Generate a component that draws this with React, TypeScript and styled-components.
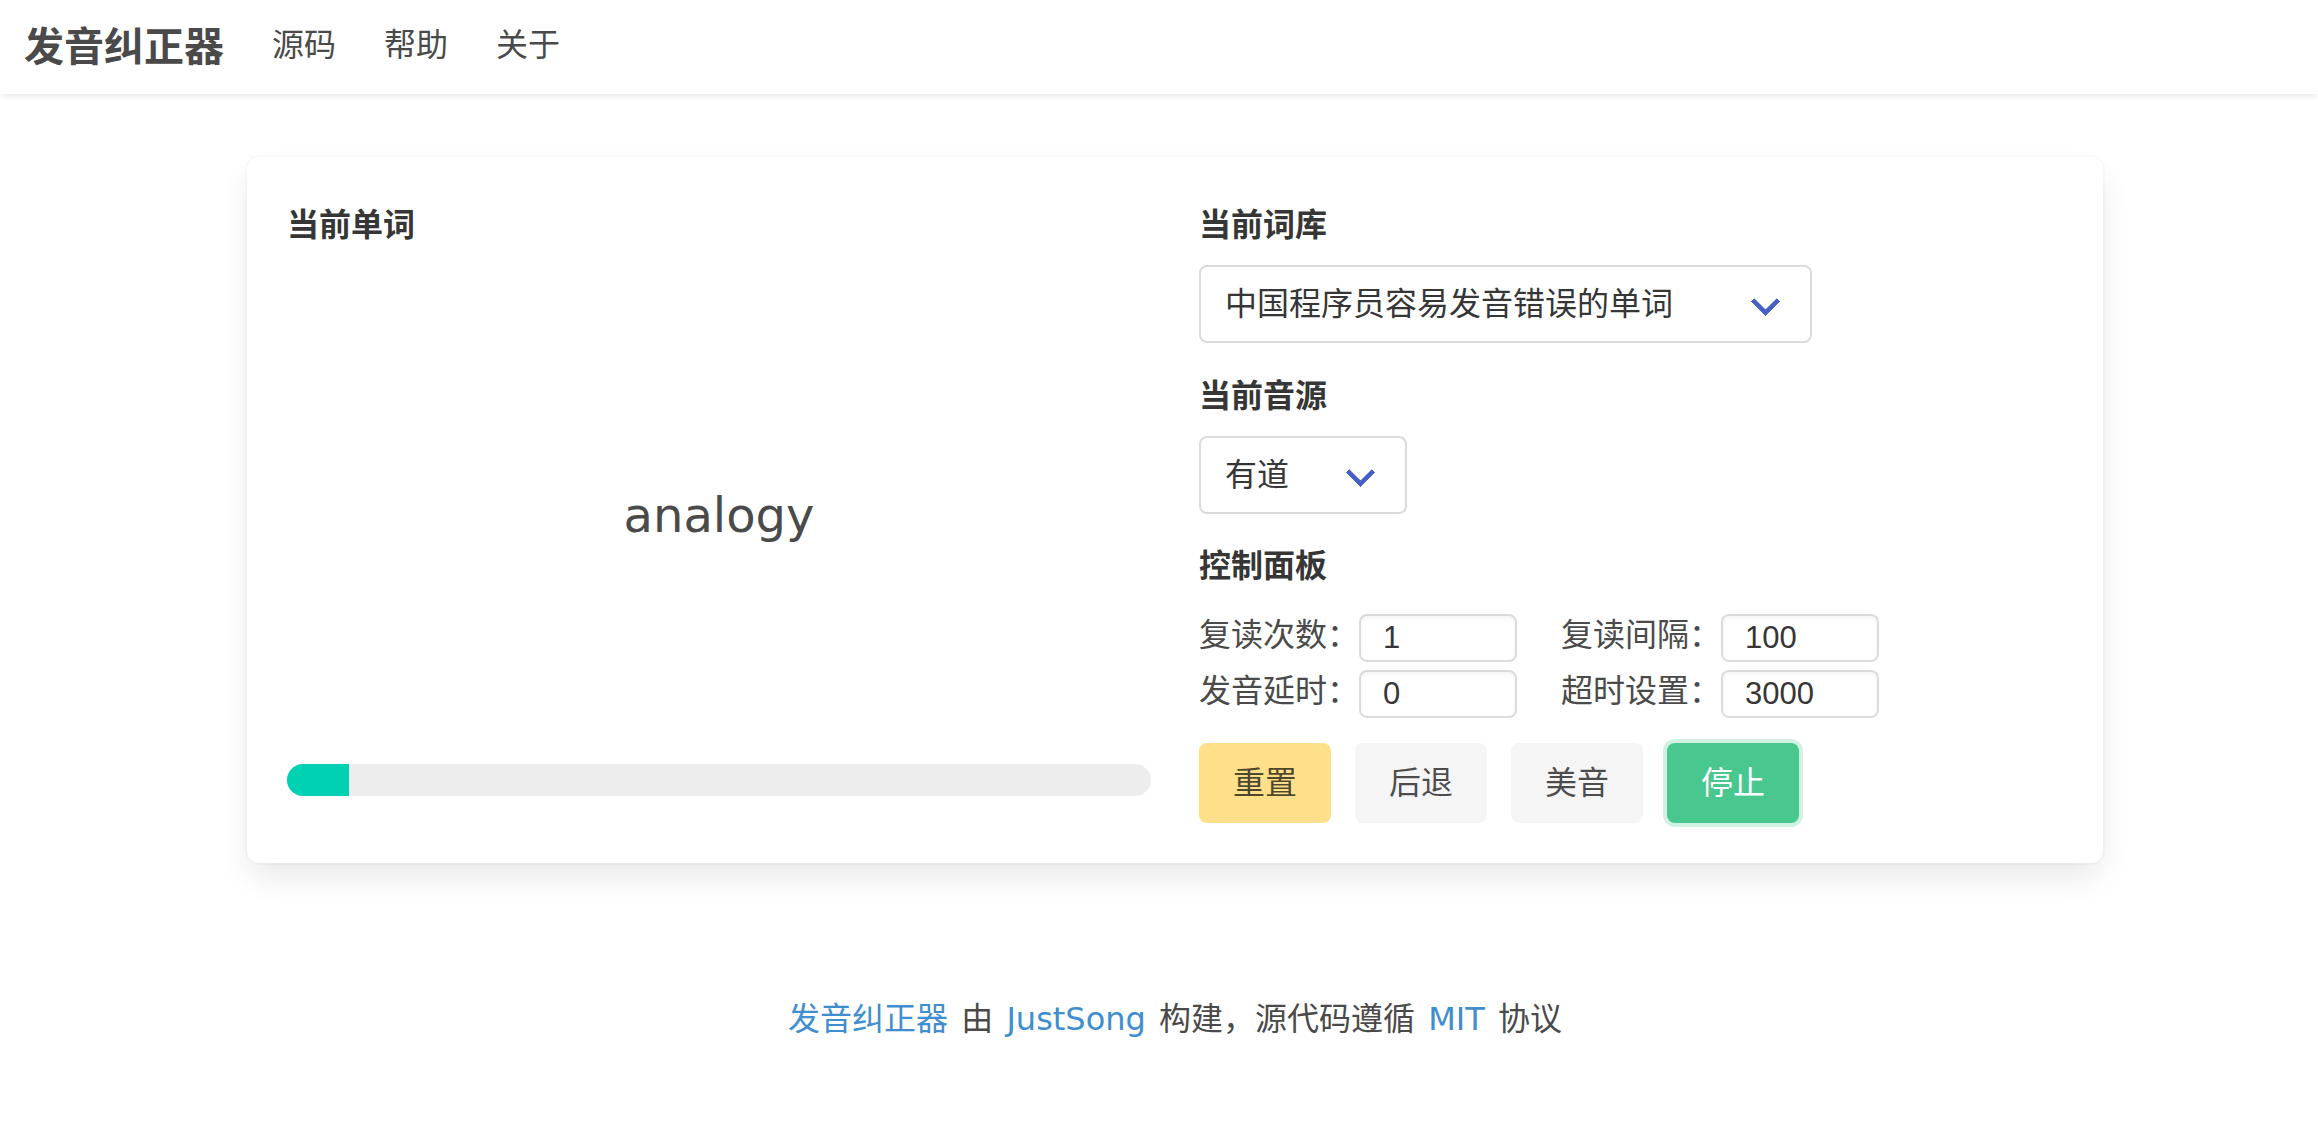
import styled, { createGlobalStyle, css } from 'styled-components';

const GlobalStyle = createGlobalStyle`
  html, body {
    margin: 0;
    padding: 0;
    background: #fff;
  }
  body {
    font-family: 'DejaVu Sans', 'Noto Sans CJK SC', sans-serif;
    font-size: 32px;
    line-height: 1.5;
    color: #4a4a4a;
  }
  * {
    box-sizing: border-box;
  }
`;

const settings = [
  { label: '复读次数：', value: '1' },
  { label: '复读间隔：', value: '100' },
  { label: '发音延时：', value: '0' },
  { label: '超时设置：', value: '3000' },
];

const actions: { text: string; variant: Variant }[] = [
  { text: '重置', variant: 'warning' },
  { text: '后退', variant: 'light' },
  { text: '美音', variant: 'light' },
  { text: '停止', variant: 'success' },
];

const progress = { value: 5, max: 70 };

const App = () => {
  return (
    <>
      <GlobalStyle />
      <Navbar>
        <Brand>发音纠正器</Brand>
        <NavItem>源码</NavItem>
        <NavItem>帮助</NavItem>
        <NavItem>关于</NavItem>
      </Navbar>
      <Page>
        <Card>
          <LeftCol>
            <Label>当前单词</Label>
            <Word>analogy</Word>
            <Progress>
              <ProgressFill style={{ width: `${(progress.value / progress.max) * 100}%` }} />
            </Progress>
          </LeftCol>
          <RightCol>
            <Label>当前词库</Label>
            <SelectWrap $width={613}>
              <Select defaultValue="cn">
                <option value="cn">中国程序员容易发音错误的单词</option>
              </Select>
            </SelectWrap>
            <Label $top={29}>当前音源</Label>
            <SelectWrap $width={208}>
              <Select defaultValue="youdao">
                <option value="youdao">有道</option>
              </Select>
            </SelectWrap>
            <Label $top={28}>控制面板</Label>
            <SettingsGrid>
              {settings.map((item) => (
                <Setting key={item.label}>
                  <SettingLabel>{item.label}</SettingLabel>
                  <Input defaultValue={item.value} />
                </Setting>
              ))}
            </SettingsGrid>
            <Buttons>
              {actions.map((item) => (
                <Button key={item.text} $variant={item.variant}>
                  {item.text}
                </Button>
              ))}
            </Buttons>
          </RightCol>
        </Card>
        <Footer>
          <Link>发音纠正器</Link> 由 <Link>JustSong</Link> 构建，源代码遵循 <Link>MIT</Link> 协议
        </Footer>
      </Page>
    </>
  );
};

export default App;

type Variant = 'warning' | 'light' | 'success';

const Navbar = styled.nav`
  height: 94px;
  display: flex;
  align-items: center;
  background: #fff;
  box-shadow: 0 3px 8px -2px rgba(0, 0, 0, 0.12);
  position: relative;
  z-index: 1;
`;

const Brand = styled.a`
  font-size: 40px;
  font-weight: 700;
  color: #4a4a4a;
  padding: 0 24px;
  line-height: 1;
`;

const NavItem = styled.a`
  font-size: 32px;
  color: #4a4a4a;
  padding: 0 24px;
  line-height: 1;
  margin-top: -4px;
`;

const Page = styled.main`
  padding: 63px 0 0 32px;
`;

const Card = styled.section`
  width: 1856px;
  margin: 0 auto;
  padding: 44px 40px 40px;
  background: #fff;
  border-radius: 12px;
  box-shadow: 0 16px 32px -4px rgba(10, 10, 10, 0.1), 0 0 0 2px rgba(10, 10, 10, 0.02);
  display: grid;
  grid-template-columns: 864px 864px;
  column-gap: 48px;
`;

const LeftCol = styled.div`
  display: flex;
  flex-direction: column;
`;

const RightCol = styled.div`
  display: flex;
  flex-direction: column;
  align-items: flex-start;
`;

const Label = styled.div<{ $top?: number }>`
  font-size: 32px;
  font-weight: 700;
  color: #363636;
  line-height: 48px;
  margin-top: ${(p) => p.$top ?? 0}px;
  margin-bottom: 16px;
`;

const Word = styled.div`
  flex: 1;
  display: flex;
  align-items: center;
  justify-content: center;
  font-size: 48px;
  color: #4a4a4a;
`;

const Progress = styled.div`
  height: 32px;
  border-radius: 9999px;
  background: #ededed;
  overflow: hidden;
  margin-bottom: 27px;
`;

const ProgressFill = styled.div`
  height: 100%;
  background: #00d1b2;
`;

const SelectWrap = styled.div<{ $width: number }>`
  position: relative;
  width: ${(p) => p.$width}px;
  height: 78px;

  &::after {
    content: '';
    position: absolute;
    right: 36px;
    top: 50%;
    width: 16px;
    height: 16px;
    margin-top: -13px;
    border: 5px solid #485fc7;
    border-top: 0;
    border-right: 0;
    border-radius: 1px;
    transform: rotate(-45deg);
    pointer-events: none;
  }
`;

const Select = styled.select`
  appearance: none;
  width: 100%;
  height: 100%;
  border: 2px solid #dbdbdb;
  border-radius: 8px;
  background: #fff;
  padding: 0 80px 0 24px;
  font-family: 'DejaVu Sans', 'Noto Sans CJK SC', sans-serif;
  font-size: 32px;
  color: #363636;
  outline: none;
`;

const SettingsGrid = styled.div`
  margin-top: 8px;
  display: grid;
  grid-template-columns: auto auto;
  column-gap: 44px;
  row-gap: 8px;
`;

const Setting = styled.div`
  display: flex;
  align-items: center;
`;

const SettingLabel = styled.span`
  width: 160px;
  font-size: 32px;
  line-height: 48px;
  color: #4a4a4a;
  margin-top: -6px;
`;

const Input = styled.input`
  width: 158px;
  height: 48px;
  border: 2px solid #dbdbdb;
  border-radius: 8px;
  padding: 0 22px;
  font-family: 'Liberation Sans', Arial, sans-serif;
  font-size: 31px;
  color: #363636;
  box-shadow: inset 0 2px 4px rgba(10, 10, 10, 0.05);
  outline: none;
`;

const Buttons = styled.div`
  margin-top: 25px;
  display: flex;
  gap: 24px;
`;

const variants = {
  warning: css`
    background: #ffe08a;
    color: rgba(0, 0, 0, 0.7);
  `,
  light: css`
    background: #f5f5f5;
    color: rgba(0, 0, 0, 0.7);
  `,
  success: css`
    background: #48c78e;
    color: #fff;
    box-shadow: 0 0 0 4px rgba(72, 199, 142, 0.25);
  `,
};

const Button = styled.button<{ $variant: Variant }>`
  height: 80px;
  padding: 0 32px;
  border: 2px solid transparent;
  border-radius: 8px;
  font-family: 'DejaVu Sans', 'Noto Sans CJK SC', sans-serif;
  font-size: 32px;
  line-height: 1.5;
  cursor: pointer;
  ${(p) => variants[p.$variant]}
`;

const Footer = styled.footer`
  margin-top: 132px;
  text-align: center;
  font-size: 32px;
  line-height: 48px;
  color: #4a4a4a;
  word-spacing: 3px;
`;

const Link = styled.a`
  color: #3e8ed0;
`;
